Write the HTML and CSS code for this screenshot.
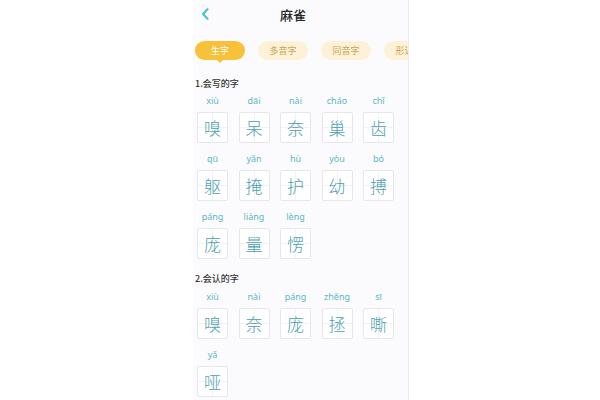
FILE: index.html
```html
<!DOCTYPE html>
<html lang="zh">
<head>
<meta charset="utf-8">
<title>麻雀</title>
<link rel="stylesheet" href="styles.css">
</head>
<body>
<div class="phone">
  <div class="header">
    <svg class="back" width="8" height="12" viewBox="0 0 8 12"><path d="M6.5 1.2 L2 6 L6.5 10.8" fill="none" stroke="#4fc1cf" stroke-width="2.2" stroke-linecap="round" stroke-linejoin="round"/></svg>
    <div class="title">麻雀</div>
  </div>
  <div class="tabs">
    <div class="tab active">生字</div>
    <div class="tab">多音字</div>
    <div class="tab">同音字</div>
    <div class="tab">形近字</div>
  </div>

  <div class="sec sec1">1.会写的字</div>
  <div class="grid">
    <div class="item"><div class="py">xiù</div><div class="card">嗅</div></div>
    <div class="item"><div class="py">dāi</div><div class="card">呆</div></div>
    <div class="item"><div class="py">nài</div><div class="card">奈</div></div>
    <div class="item"><div class="py">cháo</div><div class="card">巢</div></div>
    <div class="item"><div class="py">chǐ</div><div class="card">齿</div></div>
    <div class="item"><div class="py">qū</div><div class="card">躯</div></div>
    <div class="item"><div class="py">yǎn</div><div class="card">掩</div></div>
    <div class="item"><div class="py">hù</div><div class="card">护</div></div>
    <div class="item"><div class="py">yòu</div><div class="card">幼</div></div>
    <div class="item"><div class="py">bó</div><div class="card">搏</div></div>
    <div class="item"><div class="py">páng</div><div class="card">庞</div></div>
    <div class="item"><div class="py">liàng</div><div class="card">量</div></div>
    <div class="item"><div class="py">lèng</div><div class="card">愣</div></div>
  </div>

  <div class="sec sec2">2.会认的字</div>
  <div class="grid">
    <div class="item"><div class="py">xiù</div><div class="card">嗅</div></div>
    <div class="item"><div class="py">nài</div><div class="card">奈</div></div>
    <div class="item"><div class="py">páng</div><div class="card">庞</div></div>
    <div class="item"><div class="py">zhěng</div><div class="card">拯</div></div>
    <div class="item"><div class="py">sī</div><div class="card">嘶</div></div>
    <div class="item"><div class="py">yǎ</div><div class="card">哑</div></div>
  </div>
</div>
</body>
</html>
```

FILE: styles.css
```css
html, body {
  margin: 0;
  padding: 0;
  background: #ffffff;
}
body {
  font-family: "Noto Sans", "Noto Sans CJK SC", sans-serif;
}
.phone {
  margin-left: 193px;
  width: 215px;
  height: 400px;
  background: #fbfbfd;
  border-right: 1px solid #ebebef;
  overflow: hidden;
}
.header {
  height: 30px;
  display: flex;
  align-items: center;
}
.back {
  margin-left: 8px;
  flex-shrink: 0;
  margin-top: -2px;
}
.title {
  margin-left: 71px;
  font-family: "Noto Sans CJK SC", sans-serif;
  font-size: 13px;
  font-weight: 500;
  color: #262626;
  line-height: 16px;
}
.tabs {
  margin-top: 11px;
  padding-left: 2px;
  display: flex;
  gap: 13px;
}
.tab {
  position: relative;
  flex-shrink: 0;
  width: 50px;
  height: 19px;
  border-radius: 10px;
  background: #fdf2d7;
  color: #c9a457;
  font-family: "Noto Sans CJK SC", sans-serif;
  font-size: 9px;
  line-height: 19px;
  text-align: center;
}
.tab.active {
  background: #f8c13a;
  color: #ffffff;
}
.tab.active::after {
  content: "";
  position: absolute;
  left: 22px;
  top: 19px;
  border-left: 3px solid transparent;
  border-right: 3px solid transparent;
  border-top: 3px solid #f8c13a;
}
.sec {
  margin-left: 2px;
  font-family: "Noto Sans CJK SC", sans-serif;
  font-size: 9px;
  font-weight: 500;
  color: #333333;
  line-height: 12px;
  margin-bottom: 5px;
}
.sec1 {
  margin-top: 18px;
}
.sec2 {
  margin-top: 14px;
  margin-bottom: 6px;
}
.grid {
  padding-left: 4px;
  display: grid;
  grid-template-columns: repeat(5, 31px);
  column-gap: 10.5px;
  row-gap: 10px;
}
.item {
  display: flex;
  flex-direction: column;
  align-items: center;
}
.py {
  height: 12px;
  line-height: 12px;
  font-size: 9px;
  color: #5ab7c6;
  margin-bottom: 5px;
  white-space: nowrap;
}
.card {
  box-sizing: border-box;
  width: 31px;
  height: 31px;
  border: 1px solid #e5e7eb;
  border-radius: 2px;
  background-color: #ffffff;
  background-image:
    linear-gradient(#f0f2f4, #f0f2f4),
    linear-gradient(#f0f2f4, #f0f2f4);
  background-size: 100% 1px, 1px 100%;
  background-position: center center, center center;
  background-repeat: no-repeat;
  font-family: "Noto Sans CJK SC", sans-serif;
  font-size: 17px;
  font-weight: 300;
  color: #4f9fb0;
  line-height: 29px;
  text-align: center;
}
```
